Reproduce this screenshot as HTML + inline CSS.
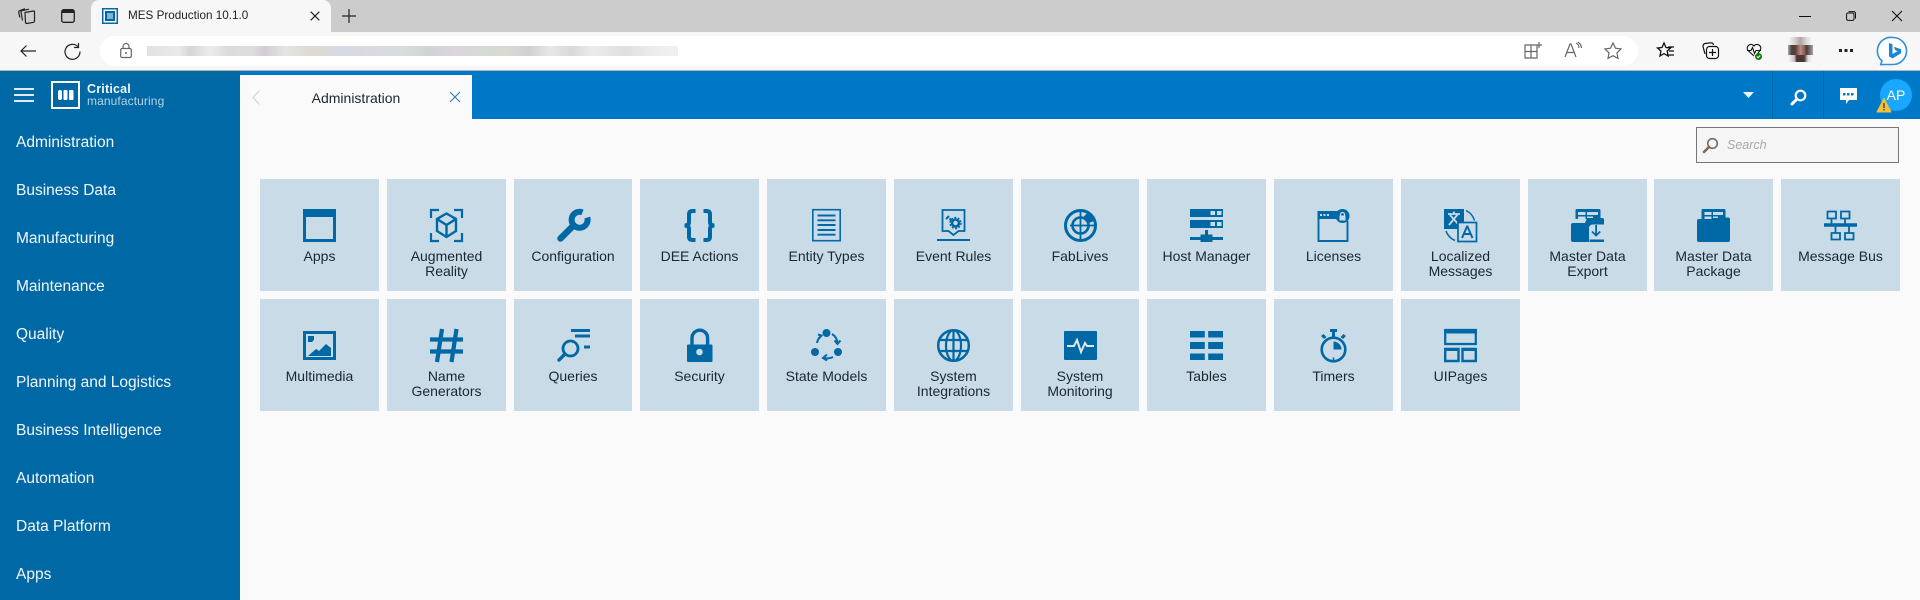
<!DOCTYPE html>
<html><head><meta charset="utf-8"><title>MES Production 10.1.0</title>
<style>
*{box-sizing:border-box}
html,body{margin:0;padding:0;width:1920px;height:600px;overflow:hidden;background:#fafafa;font-family:"Liberation Sans",sans-serif}
.a{position:absolute}
svg{position:absolute;overflow:visible}
.t{position:absolute;width:119px;height:112px;background:#c8dbe7}
.t svg{left:43px;top:30px;width:33px;height:33px;color:#0068a5;fill:none;stroke:#0068a5}
.t div{position:absolute;left:0;right:0;top:70px;text-align:center;font-size:14px;line-height:15px;color:#1c2730}
.n{position:absolute;left:16px;font-size:15.5px;line-height:20px;color:#f2f7fa}
.c{fill:none;stroke:#222;stroke-width:1.2}
.g{fill:none;stroke:#666;stroke-width:1.2}
.f{fill:#0068a5;stroke:none}
.w{fill:#c8dbe7;stroke:none}
</style></head><body>
<!-- browser chrome -->
<div class="a" style="left:0;top:0;width:1920px;height:32px;background:#ccc"></div>
<div class="a" style="left:0;top:32px;width:1920px;height:38px;background:#f7f7f7"></div>
<div class="a" style="left:0;top:70px;width:1920px;height:1px;background:#b5b5b5"></div>
<div class="a" style="left:91px;top:0;width:240px;height:33px;background:#f7f7f7;border-radius:8px 8px 0 0"></div>
<div class="a" style="left:100px;top:36px;width:1538px;height:30px;background:#fff;border-radius:15px"></div>
<svg style="left:18px;top:8px" width="17" height="16" viewBox="0 0 17 16"><path class="c" d="M7 4.500l8.500-1.500q1 0 1 1v9q0 1-1 1.300L9 15.500q-1.300 0-1.500-1z"/><path class="c" d="M4.500 12.500L3 4q0-1 1-1.300L11 1.200M1.800 9.500L.7 4q0-1 1-1.300L7 .7"/></svg>
<svg style="left:61px;top:9px" width="14" height="14" viewBox="0 0 14 14"><rect class="c" x=".7" y=".7" width="12.600" height="12.600" rx="2" style="stroke-width:1.300"/><path d="M1 1h12v3H1z" fill="#222"/></svg>
<svg style="left:102px;top:8px" width="16" height="16" viewBox="0 0 16 16"><rect x="0" y="0" width="16" height="16" fill="#0068a5"/><rect x="1.500" y="1.500" width="13" height="13" fill="#fff"/><rect x="3" y="3" width="10" height="10" fill="#0068a5"/><path d="M5.500 5h1v6h-1zM7.500 5h1v6h-1zM9.500 5h1v6h-1z" fill="#fff"/></svg>
<div class="a" style="left:128px;top:8px;font-size:11.700px;line-height:16px;color:#222;white-space:nowrap">MES Production 10.1.0</div>
<svg style="left:310px;top:11px" width="10" height="10" viewBox="0 0 10 10"><path d="M.7.700l8.600 8.600M9.300.700L.7 9.300" fill="none" stroke="#222" stroke-width="1.200"/></svg>
<svg style="left:342px;top:9px" width="14" height="14" viewBox="0 0 14 14"><path d="M7 0v14M0 7h14" stroke="#222" stroke-width="1.200"/></svg>
<svg style="left:20px;top:45px" width="16" height="12" viewBox="0 0 16 12"><path d="M16 6H1M6.500.500L1 6l5.500 5.500" fill="none" stroke="#222" stroke-width="1.200"/></svg>
<svg style="left:64px;top:43px" width="17" height="17" viewBox="0 0 17 17"><path d="M14.500 0v4.500H10M13.800 3.500A7.500 7.500 0 1 0 16 8.500" fill="none" stroke="#222" stroke-width="1.200"/></svg>
<svg style="left:120px;top:43px" width="12" height="15" viewBox="0 0 12 15"><rect x=".7" y="5.500" width="10.600" height="9" rx="1.500" class="g"/><path class="g" d="M3 5.500V3.500a3 3 0 0 1 6 0v2"/><circle cx="6" cy="10" r="1" fill="#666"/></svg>
<div class="a" style="left:147px;top:46px;width:531px;height:10px;opacity:.85;background:linear-gradient(90deg,#ddd 0,#e6e6e6 6%,#cfcfcf 8%,#e8e8e8 12%,#d9d4d9 15%,#d8d8d8 20%,#c9c2cf 22%,#e0e0e0 26%,#d8d3c8 31%,#cdd5de 36%,#d8d0dd 42%,#cfd8d6 48%,#c8cccc 53%,#d7cdd8 58%,#cbd6d0 63%,#d6d2c9 68%,#c8c8cc 72%,#e3e3e3 76%,#d2d2d2 80%,#e8e8e8 84%,#d9d9d9 90%,#e9e9e9 95%,#eee 100%)"></div>
<svg style="left:1524px;top:42px" width="18" height="17" viewBox="0 0 18 17"><path class="g" d="M1 3h12v13H1zM7 3v13M1 9.500h12M15 0v6M12 3h6"/></svg>
<svg style="left:1564px;top:42px" width="18" height="16" viewBox="0 0 18 16"><path class="g" d="M1 15L6 2h1l5 13M3 10.500h7M12 1c2 1 3 3 3 5M14 0c2 1.500 3.500 4 3.500 6"/></svg>
<svg style="left:1604px;top:42px" width="18" height="17" viewBox="0 0 18 17"><path class="g" d="M9 1l2.500 5.200 5.500.7-4 3.900 1 5.600-5-2.700-5 2.700 1-5.600-4-3.900 5.500-.7z"/></svg>
<svg style="left:1657px;top:42px" width="18" height="17" viewBox="0 0 18 17"><path d="M7 1l2 4.500 4.500.5-3.300 3 .9 5-4.100-2.400L3 14l.9-5L.5 6 5 5.500z" fill="none" stroke="#111" stroke-width="1.300"/><path d="M11 5h6M12 9h5M10 13h7" stroke="#111" stroke-width="1.200"/></svg>
<svg style="left:1702px;top:42px" width="17" height="17" viewBox="0 0 17 17"><path d="M3 12L1 4.500Q1 2 3 1.500L9 .8Q11 .8 11.500 3" fill="none" stroke="#111" stroke-width="1.200"/><rect x="4.500" y="4.500" width="12" height="12" rx="3" fill="#f7f7f7" stroke="#111" stroke-width="1.200"/><path d="M10.500 7v7M7 10.500h7" stroke="#111" stroke-width="1.200"/></svg>
<svg style="left:1746px;top:43px" width="17" height="18" viewBox="0 0 17 18"><path d="M8 13L2 7.500C-1 3.500 5-1 8 3c3-4 9 .5 6 4.500L12 10M1 7.500h4l1.500-3 2 6 1.500-3h5" fill="none" stroke="#111" stroke-width="1.100"/><circle cx="12.500" cy="13.500" r="3.500" fill="#107c10"/><path d="M10.800 13.500l1.200 1.200 2.200-2.200" fill="none" stroke="#fff"/></svg>
<div class="a" style="left:1788px;top:37px;width:25px;height:25px;background:linear-gradient(90deg,#aaa,#503c38 15%,#5a403c 30%,#b98b84 50%,#9a6a64 62%,#4e3a36 75%,#a5a5a0 100%)"></div>
<div class="a" style="left:1788px;top:37px;width:25px;height:8px;background:linear-gradient(90deg,#fafafa,#ccc 30%,#b4a0a0 50%,#ddd 75%,#fafafa)"></div>
<div class="a" style="left:1788px;top:55px;width:25px;height:7px;background:linear-gradient(90deg,#fafafa,#cbc 25%,#4a3531 35%,#4c3834 65%,#ddd 80%,#fafafa)"></div>
<svg style="left:1839px;top:49px" width="14" height="3" viewBox="0 0 14 3"><path d="M0 0h3v3H0zM5.500 0h3v3h-3zM11 0h3v3h-3z" fill="#222"/></svg>
<svg style="left:1878px;top:36px" width="30" height="30" viewBox="0 0 30 30"><path d="M15 1.500A13.500 13.500 0 0 1 15 28.500H6Q3 28.500 2.500 29L4 25A13.500 13.500 0 0 1 15 1.500z" fill="#fff" stroke="#2f8fd8" stroke-width="1.600"/><path d="M11 7l3.500 1.200V18l5-2.800-2.300-1.100-1.300-3.300 7.200 2.500v4L14.500 22.500 11 20.500z" fill="#1e86d8"/></svg>
<svg style="left:1799px;top:16px" width="12" height="1" viewBox="0 0 12 1"><path d="M0 0h12v1H0z" fill="#111"/></svg>
<svg style="left:1846px;top:11px" width="10" height="10" viewBox="0 0 10 10"><rect x=".6" y="2" width="7.400" height="7.400" rx="1.500" fill="none" stroke="#111"/><path d="M2.500.6h5q2 0 2 2v5" fill="none" stroke="#111"/></svg>
<svg style="left:1892px;top:11px" width="10" height="10" viewBox="0 0 10 10"><path d="M0 0l10 10M10 0L0 10" stroke="#111" stroke-width="1.100"/></svg>

<!-- app header -->
<div class="a" style="left:240px;top:71px;width:1680px;height:48px;background:#0078c8"></div>
<div class="a" style="left:0;top:71px;width:240px;height:529px;background:#0068a5"></div>
<div class="a" style="left:240px;top:75px;width:232px;height:44px;background:#fafafa"></div>
<div class="a" style="left:1772px;top:71px;width:1px;height:48px;background:#0068a5"></div>
<div class="a" style="left:1823px;top:71px;width:1px;height:48px;background:#0068a5"></div>
<svg style="left:14px;top:88px" width="20" height="14" viewBox="0 0 20 14"><path d="M0 1h20M0 7h20M0 13h20" stroke="#fff" stroke-width="1.700"/></svg>
<svg style="left:51px;top:81px" width="29" height="28" viewBox="0 0 29 28"><rect x="1" y="1" width="27" height="26" fill="none" stroke="#fff" stroke-width="2"/><rect x="7" y="9" width="4" height="10" rx="2" fill="#fff"/><rect x="12.500" y="9" width="4" height="10" rx="1" fill="#fff"/><rect x="18" y="9" width="4.500" height="10" rx="1" fill="#fff"/></svg>
<div class="a" style="left:87px;top:82px;font-size:12.500px;line-height:14px;font-weight:bold;color:#f0f6fa;letter-spacing:.2px">Critical</div>
<div class="a" style="left:87px;top:94px;font-size:12px;line-height:14px;color:#b6d2e5;letter-spacing:.1px">manufacturing</div>
<svg style="left:252px;top:90px" width="8" height="15" viewBox="0 0 8 15"><path d="M7.500.5L1 7.500l6.500 7" fill="none" stroke="#c3d9ea" stroke-width="1.200"/></svg>
<div class="a" style="left:240px;top:90px;width:232px;text-align:center;font-size:14px;line-height:16px;color:#1c2730">Administration</div>
<svg style="left:450px;top:92px" width="10" height="10" viewBox="0 0 10 10"><path d="M0 0l10 10M10 0L0 10" stroke="#3d7fae" stroke-width="1.200"/></svg>
<svg style="left:1743px;top:92px" width="11" height="6" viewBox="0 0 11 6"><path d="M0 0h11L5.500 6z" fill="#eaf4fb"/></svg>
<svg style="left:1790px;top:89px" width="17" height="17" viewBox="0 0 17 17"><circle cx="10.500" cy="6.500" r="4.800" fill="none" stroke="#fff" stroke-width="2.200"/><path d="M7 10l-5 5" stroke="#fff" stroke-width="3" stroke-linecap="round"/></svg>
<svg style="left:1840px;top:88px" width="17" height="16" viewBox="0 0 17 16"><path d="M0 0h17v12H9l-3 4v-4H0z" fill="#fff"/><path d="M3 5h2.500v2.500H3zM7 5h2.500v2.500H7zM11 5h2.500v2.500H11z" fill="#0078c8"/></svg>
<div class="a" style="left:1880px;top:79px;width:32px;height:32px;border-radius:50%;background:#1aa7ff;color:#fff;font-size:14px;line-height:32px;text-align:center">AP</div>
<svg style="left:1877px;top:98px" width="14" height="15" viewBox="0 0 14 15"><path d="M7 .5L14 14H0z" fill="#f3c236" stroke="#f3c236" stroke-linejoin="round"/><path d="M6.300 5h1.400v5H6.300zM6.300 11h1.400v1.500H6.300z" fill="#444"/></svg>

<!-- search -->
<div class="a" style="left:1696px;top:127px;width:203px;height:36px;background:#f5f5f5;border:1px solid #777"></div>
<svg style="left:1702px;top:137px" width="17" height="17" viewBox="0 0 17 17"><circle cx="10.500" cy="6.500" r="4.800" fill="none" stroke="#7a6a5c" stroke-width="1.600"/><path d="M7 10l-5 5" stroke="#7a6a5c" stroke-width="2.600" stroke-linecap="round"/></svg>
<div class="a" style="left:1727px;top:137px;font-size:12.500px;line-height:16px;font-style:italic;color:#a8a8a8">Search</div>

<!-- sidebar -->
<div class="n" style="top:133px">Administration</div>
<div class="n" style="top:181px">Business Data</div>
<div class="n" style="top:229px">Manufacturing</div>
<div class="n" style="top:277px">Maintenance</div>
<div class="n" style="top:325px">Quality</div>
<div class="n" style="top:373px">Planning and Logistics</div>
<div class="n" style="top:421px">Business Intelligence</div>
<div class="n" style="top:469px">Automation</div>
<div class="n" style="top:517px">Data Platform</div>
<div class="n" style="top:565px">Apps</div>

<!-- tiles row 1 -->
<div class="t" style="left:260px;top:179px"><svg viewBox="0 0 33 33"><path class="f" d="M0 0h33v33H0zM3 8v22h27V8z" fill-rule="evenodd"/></svg><div>Apps</div></div>
<div class="t" style="left:387px;top:179px"><svg viewBox="0 0 33 33" stroke-width="2"><path d="M9 1H1v8M24 1h8v8M1 24v8h8M32 24v8h-8" stroke-width="2.200"/><path d="M16.500 4.500L26 10v12l-9.500 6L7 22V10zM7 10l9.500 6L26 10M16.500 16v12" stroke-width="2.400"/></svg><div>Augmented<br>Reality</div></div>
<div class="t" style="left:514px;top:179px;width:118px"><svg style="left:42.500px" viewBox="0 0 33 33"><path d="M3.500 29.500L15 18" stroke-width="6.500" stroke-linecap="round"/><path d="M25.500 3.300A8 8 0 1 0 30.300 8.500" stroke-width="6"/></svg><div>Configuration</div></div>
<div class="t" style="left:640px;top:179px"><svg viewBox="0 0 33 33" stroke-width="4"><path d="M12.500 2H9.500Q6 2 6 5.500v7.500Q6 16.500 1.500 16.500 6 16.500 6 20v7.500q0 3.500 3.500 3.500h3M20.500 2h3Q27 2 27 5.500v7.500q0 3.500 4.500 3.500Q27 16.500 27 20v7.500q0 3.500-3.500 3.500h-3"/></svg><div>DEE Actions</div></div>
<div class="t" style="left:767px;top:179px"><svg viewBox="0 0 33 33"><rect x="2.800" y=".7" width="27.400" height="31" stroke-width="1.600"/><path d="M7.500 6.500h18M7.500 11.300h18M7.500 16h18M7.500 21h18M7.500 25.700h18" stroke-width="1.900"/></svg><div>Entity Types</div></div>
<div class="t" style="left:894px;top:179px"><svg viewBox="0 0 33 33"><path d="M5.500 1h22v21h-6l-5 4-5-4h-6z" stroke-width="1.800"/><path d="M0 31h33" stroke-width="2"/><circle cx="18.500" cy="14" r="3.500" stroke-width="2.600"/><circle cx="18.500" cy="14" r="5.500" stroke-width="1.400" stroke-dasharray="2 1.500"/><path d="M9 10l3-3M12.500 9.500l2 2" stroke-width="2"/></svg><div>Event Rules</div></div>
<div class="t" style="left:1021px;top:179px;width:118px"><svg style="left:42.500px" viewBox="0 0 33 33"><circle cx="16.500" cy="16.500" r="15" stroke-width="3"/><circle cx="16.500" cy="16.500" r="8" stroke-width="2.600"/><path d="M16.500 1v31M6 16.500h26" stroke-width="1.800"/><path class="f" d="M19 8.500A9 9 0 0 1 25 14l6-2.500A16 16 0 0 0 24 3z"/></svg><div>FabLives</div></div>
<div class="t" style="left:1147px;top:179px"><svg viewBox="0 0 33 33"><path class="f" d="M0 0h33v8H0zM0 11h33v8H0z"/><path class="w" d="M20.500 2h4.500v4h-4.500zM27 2h4.500v4H27zM20.500 13h4.500v4h-4.500zM27 13h4.500v4H27z"/><path class="f" d="M15 21h3v4.500h4.500v2.500H33v3H22.500v2h-12v-2H0v-3h10.500v-2.500H15z"/></svg><div>Host Manager</div></div>
<div class="t" style="left:1274px;top:179px"><svg viewBox="0 0 33 33"><path d="M1.500 4v28h29V12" stroke-width="1.900"/><path class="f" d="M.5 2h20v8H.5z"/><path class="w" d="M3 5h2v2H3zM6.500 5h2v2h-2zM10 5h2v2h-2z"/><circle class="f" cx="25.500" cy="7" r="7"/><rect class="w" x="22.500" y="6.500" width="6" height="5"/><path d="M23.500 6.500v-1a2 2 0 0 1 4 0v1" stroke="#c8dbe7" stroke-width="1.200"/></svg><div>Licenses</div></div>
<div class="t" style="left:1401px;top:179px"><svg viewBox="0 0 33 33"><path class="f" d="M0 0h20v20H0z"/><path d="M4 5h12M10 2.500V5M5 16l9-11M6 6l9 10" stroke="#c8dbe7" stroke-width="1.800"/><rect x="14" y="13.500" width="18.500" height="19" fill="#c8dbe7" stroke-width="1.700"/><path d="M18 29l5-11.500h.4L28.500 29M19.800 25h7" stroke-width="2"/><path d="M22 1.500a16 16 0 0 1 8.500 10M2 22a16 16 0 0 0 9 9.500" stroke-width="1.500"/></svg><div>Localized<br>Messages</div></div>
<div class="t" style="left:1528px;top:179px"><svg viewBox="0 0 33 33"><path class="f" d="M6 0h22q1.500 0 1.500 1.500V10H4.500V1.500Q4.500 0 6 0z"/><path class="w" d="M7 3h7.500v3H7zM16 3h11v3H16zM7 7.500h7.500V10H7zM16 7.500h6V10h-6z"/><path class="f" d="M2 14h16v19H2q-2 0-2-2V16q0-2 2-2zM16 9h15q2 0 2 2v4.500H22q-4 0-4 4V14h-4z"/><path class="f" d="M24.200 16h1.800v8.500l2.600-2.600 1.200 1.200-4.700 4.700-4.700-4.700 1.200-1.200 2.600 2.600zM18.500 30.500H33V33H18.500z"/></svg><div>Master Data<br>Export</div></div>
<div class="t" style="left:1654px;top:179px"><svg viewBox="0 0 33 33"><path class="f" d="M6 0h21q1.500 0 1.500 1.500V8.500H31q2 0 2 2V31q0 2-2 2H2q-2 0-2-2V12q0-2 2-2h2.500V1.500Q4.500 0 6 0z"/><path class="w" d="M7.500 3h7v3h-7zM16 3h10v3H16zM7.500 7.500h7V10h-7zM16 7.500h5V9h-5z"/></svg><div>Master Data<br>Package</div></div>
<div class="t" style="left:1781px;top:179px"><svg viewBox="0 0 33 33" stroke-width="1.800"><path d="M3.500 2.500h8.500v7H3.500zM17 2.500h8.500v7H17zM7.500 24h8.500v6.500H7.500zM21 24h8.500v6.500H21z"/><path d="M0 16h33" stroke-width="3.500"/><path d="M7.500 9.500V16M21 9.500V16M11.500 16v8M25 16v8"/></svg><div>Message Bus</div></div>

<!-- tiles row 2 -->
<div class="t" style="left:260px;top:299px"><svg viewBox="0 0 33 33"><path class="f" d="M0 2h33v29H0zM3 5v23h27V5z" fill-rule="evenodd"/><path class="f" d="M5 7h6v4l-2 2H5zM5 27l8-7 3 2 7-7 5 4v8z"/></svg><div>Multimedia</div></div>
<div class="t" style="left:387px;top:299px"><svg viewBox="0 0 33 33" stroke-width="4.200"><path d="M12 0L7 33M26.500 0L21.500 33M0 10.500h33M0 22.500h33"/></svg><div>Name<br>Generators</div></div>
<div class="t" style="left:514px;top:299px;width:118px"><svg style="left:42.500px" viewBox="0 0 33 33"><circle cx="13.500" cy="19.500" r="7.500" stroke-width="2.800"/><path d="M8 25l-6 6" stroke-width="3.400" stroke-linecap="round"/><path d="M14 1.500h19M18 7h15" stroke-width="3"/><path d="M27 18h6" stroke-width="3"/></svg><div>Queries</div></div>
<div class="t" style="left:640px;top:299px"><svg viewBox="0 0 33 33"><rect class="f" x="4" y="15.500" width="25.500" height="17.500" rx="1"/><path d="M9 16V9a7.800 7.800 0 0 1 15.600 0v7" stroke-width="3.400"/><circle class="w" cx="16.500" cy="23" r="3.300"/></svg><div>Security</div></div>
<div class="t" style="left:767px;top:299px"><svg viewBox="0 0 33 33"><circle class="f" cx="16.500" cy="4" r="4"/><circle class="f" cx="5" cy="23" r="4"/><circle class="f" cx="28" cy="23" r="4"/><path d="M22 5c2.500 1.500 5 4 5.500 9M7 14c.5-3 1.500-5 4-7M23 28c-3 1.500-6 1.800-9 1" stroke-width="2"/><path d="M24.500 11.500l3 3.500 3-3.500M9 9.500l2.500-3-3.500-1M17 25.500L13 29l4 2.500" stroke-width="2"/></svg><div>State Models</div></div>
<div class="t" style="left:894px;top:299px"><svg viewBox="0 0 33 33" stroke-width="2.200"><circle cx="16.500" cy="16.500" r="15.300" stroke-width="2.500"/><ellipse cx="16.500" cy="16.500" rx="7.500" ry="15.300"/><path d="M1.500 11h30M1.500 22h30M16.500 1v31"/></svg><div>System<br>Integrations</div></div>
<div class="t" style="left:1021px;top:299px;width:118px"><svg style="left:42.500px" viewBox="0 0 33 33"><rect class="f" x="0" y="2" width="33" height="29" rx="1"/><path d="M3 17h7l3-6 4 12 4-9 2 3h7" stroke="#dbe8f0" stroke-width="2"/></svg><div>System<br>Monitoring</div></div>
<div class="t" style="left:1147px;top:299px"><svg viewBox="0 0 33 33"><path class="f" d="M0 2h14.800v6.500H0zM18.200 2H33v6.500H18.200zM0 13h14.800v7H0zM18.200 13H33v7H18.200zM0 24.500h14.800V31H0zM18.200 24.500H33V31H18.200z"/></svg><div>Tables</div></div>
<div class="t" style="left:1274px;top:299px"><svg viewBox="0 0 33 33"><circle cx="16.500" cy="20.500" r="11.800" stroke-width="2.600"/><path class="f" d="M13 0h7v3h-2v5h-3V3h-2zM4 7l2.500-2 3 3-2.500 2zM29 7l-2.500-2-3 3 2.500 2z"/><path class="f" d="M16.500 12.500a8 8 0 0 1 8 8h-8z"/><path d="M16.500 28.500V31" stroke-width="1.600"/></svg><div>Timers</div></div>
<div class="t" style="left:1401px;top:299px"><svg viewBox="0 0 33 33"><path d="M1.200 1h30.600v14H1.200z" stroke-width="2.200"/><path class="f" d="M0 0h33v4.500H0z"/><path d="M1.200 20h13.300v12H1.200zM18.500 20h13.300v12H18.500z" stroke-width="2.400"/><path class="f" d="M0 19h15.500v3H0zM17.500 19H33v3H17.500z"/></svg><div>UIPages</div></div>
</body></html>
